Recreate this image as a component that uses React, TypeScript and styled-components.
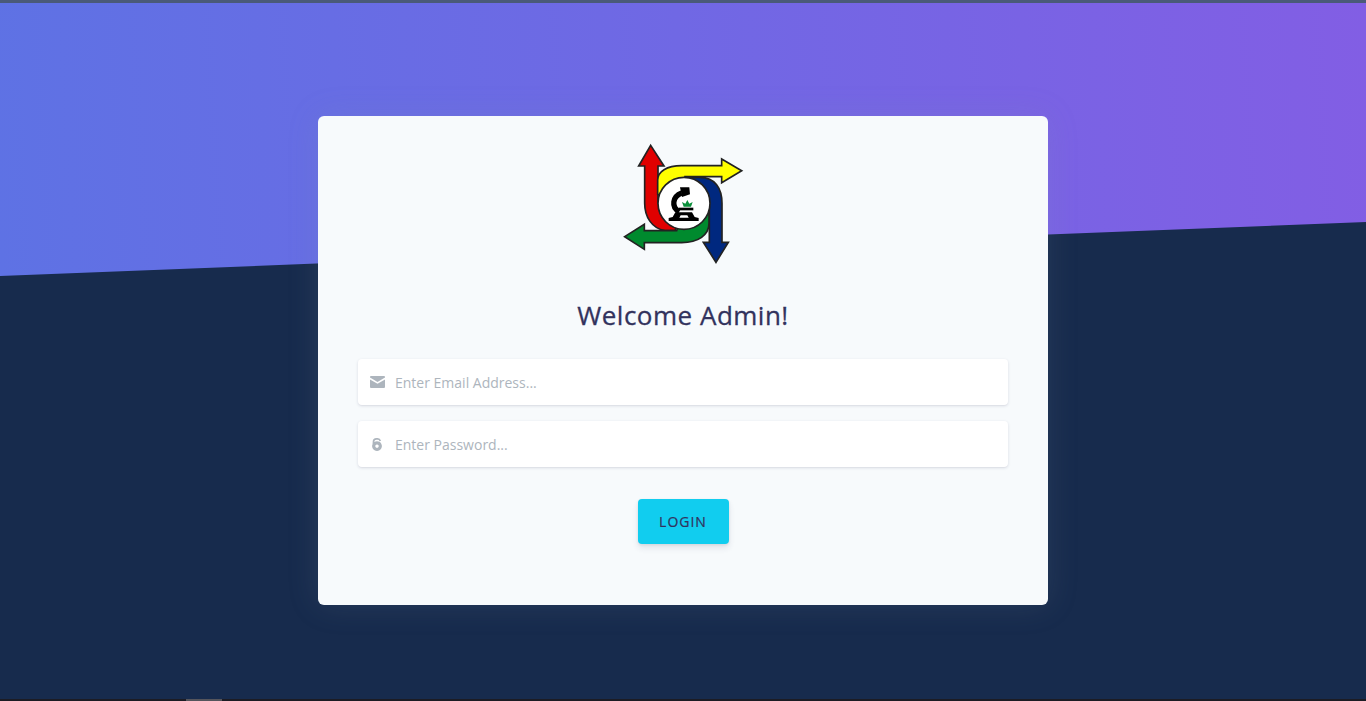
import React from "react";
import styled, { createGlobalStyle } from "styled-components";

const Global = createGlobalStyle`
  html, body { margin: 0; padding: 0; height: 100%; overflow: hidden; }
  body { font-family: "Open Sans", "Liberation Sans", sans-serif; background: #172b4d; }
  * { box-sizing: border-box; }
`;

const Page = styled.div`
  width: 100%;
  height: 701px;
  display: flex;
  flex-direction: column;
  background: #172b4d;
`;

const TopStrip = styled.div`
  height: 3px;
  flex: none;
  background: #4a5a78;
`;

const Main = styled.main`
  position: relative;
  flex: 1;
  min-height: 0;
  display: flex;
  justify-content: center;
  align-items: flex-start;
  padding-top: 113px;
`;

const Backdrop = styled.div`
  position: absolute;
  left: 0;
  right: 0;
  top: 0;
  height: 273px;
  background: linear-gradient(87deg, #5e72e4 0, #825ee4 100%);
  clip-path: polygon(0 0, 100% 0, 100% 219px, 0 100%);
`;

const Card = styled.section`
  position: relative;
  width: 730px;
  height: 489px;
  padding: 19px 40px 0;
  display: flex;
  flex-direction: column;
  align-items: center;
  background: #f7fafc;
  border-radius: 6px;
  box-shadow: 0 0 32px 0 rgba(136, 152, 170, 0.15);
`;

const LogoMark = styled.svg`
  width: 145px;
  height: 135px;
  flex: none;
  display: block;
`;

const Title = styled.h1`
  margin: 27px 0 0;
  font-size: 26px;
  line-height: 36px;
  font-weight: 500;
  letter-spacing: 0.5px;
  -webkit-text-stroke: 0.3px #32325d;
  color: #32325d;
  text-align: center;
`;

const Form = styled.form`
  width: 100%;
  margin-top: 26px;
  display: flex;
  flex-direction: column;
  align-items: center;
  gap: 16px;
`;

const Field = styled.label`
  width: 100%;
  height: 46px;
  display: flex;
  align-items: center;
  background: #fff;
  border-radius: 4px;
  box-shadow: 0 1px 3px rgba(50, 50, 93, 0.15), 0 1px 0 rgba(0, 0, 0, 0.02);
`;

const IconSlot = styled.span`
  width: 37px;
  padding-left: 12px;
  flex: none;
  display: flex;
  align-items: center;
`;

const FieldIcon = styled.svg`
  display: block;
  fill: #adb5bd;
`;

const TextInput = styled.input`
  flex: 1;
  min-width: 0;
  height: 100%;
  border: 0;
  outline: 0;
  padding: 0;
  background: transparent;
  font-family: inherit;
  font-size: 14px;
  color: #525f7f;
  border-radius: 4px;
  &::placeholder { color: #adb5bd; opacity: 1; }
`;

const LoginButton = styled.button`
  margin-top: 16px;
  width: 91px;
  height: 45px;
  border: 0;
  border-radius: 4px;
  background: #11cdef;
  color: #32325d;
  font-family: inherit;
  font-size: 14px;
  font-weight: 500;
  letter-spacing: 1px;
  -webkit-text-stroke: 0.2px #32325d;
  text-transform: uppercase;
  box-shadow: 0 4px 6px rgba(50, 50, 93, 0.11), 0 1px 3px rgba(0, 0, 0, 0.08);
`;

const BottomStrip = styled.div`
  height: 2px;
  flex: none;
  background: #1c1c24;
  padding-left: 186px;
`;

const ScrollThumb = styled.div`
  width: 36px;
  height: 100%;
  background: #55555c;
`;

const Logo = () => (
  <LogoMark viewBox="3 0 435 405" aria-label="Logo">
    <g stroke="#222" strokeWidth="5" strokeLinejoin="miter">
      <path fill="#e00000" d="M122 31 L162 93 L144 93 L144 205 L222 205 L195 287 L165 287 C125 280 104 245 104 205 L104 93 L86 93 Z" />
      <path fill="#ffff00" d="M395 107 L335 72 L335 92 L215 92 C170 92 143 110 143 135 L143 178 L222 205 L225 125 L335 125 L335 143 Z" />
      <path fill="#00287f" d="M318 382 L355 322 L336 322 L336 205 C336 160 315 127 270 127 L230 127 L230 205 L298 215 L298 322 L280 322 Z" />
      <path fill="#008a2e" d="M44 305 L103 268 L103 287 L200 287 L222 205 L297 235 L297 265 C297 300 265 323 215 323 L103 323 L103 343 Z" />
      <circle cx="222" cy="205" r="78" fill="#fff" />
    </g>
    <path d="M215 174 C188 184 182 216 208 230" fill="none" stroke="#000" strokeWidth="16" />
    <path fill="#000" d="M210 157 L238 157 L240 178 L216 186 Z" />
    <rect x="206" y="218" width="44" height="8" fill="#000" />
    <path fill="#000" d="M196 232 L246 232 L254 246 L266 249 L266 258 L176 258 L176 249 L188 246 Z" />
    <path fill="#fff" d="M208 248 L236 248 L232 241 L212 241 Z" />
    <path fill="#0a8f3a" d="M232 195 L238 206 L248 201 L243 215 L221 215 L216 201 L226 206 Z" />
  </LogoMark>
);

const MailIcon = () => (
  <FieldIcon width="15" height="12" viewBox="0 0 15 12">
    <path d="M1 0 H14 A1 1 0 0 1 15 1 V1.6 L7.5 6 L0 1.6 V1 A1 1 0 0 1 1 0 Z" />
    <path d="M0 3.4 L7.5 7.8 L15 3.4 V11 A1 1 0 0 1 14 12 H1 A1 1 0 0 1 0 11 Z" />
  </FieldIcon>
);

const LockIcon = () => (
  <FieldIcon width="12" height="13" viewBox="-2 0 12 13">
    <path fillRule="evenodd" d="M5 3.2 A4.9 4.9 0 1 1 4.99 3.2 Z M5 6.4 A1.7 1.7 0 1 0 5.01 6.4 Z" />
    <path d="M1.5 6 V3.7 A2.9 2.9 0 0 1 4.4 0.9 H5.6 A2.9 2.9 0 0 1 8.3 2.9" fill="none" stroke="#adb5bd" strokeWidth="1.7" />
  </FieldIcon>
);

export default function App() {
  return (
    <Page>
      <Global />
      <TopStrip />
      <Main>
        <Backdrop />
        <Card>
          <Logo />
          <Title>Welcome Admin!</Title>
          <Form>
            <Field>
              <IconSlot><MailIcon /></IconSlot>
              <TextInput type="email" placeholder="Enter Email Address..." />
            </Field>
            <Field>
              <IconSlot><LockIcon /></IconSlot>
              <TextInput type="password" placeholder="Enter Password..." />
            </Field>
            <LoginButton type="button">Login</LoginButton>
          </Form>
        </Card>
      </Main>
      <BottomStrip><ScrollThumb /></BottomStrip>
    </Page>
  );
}
